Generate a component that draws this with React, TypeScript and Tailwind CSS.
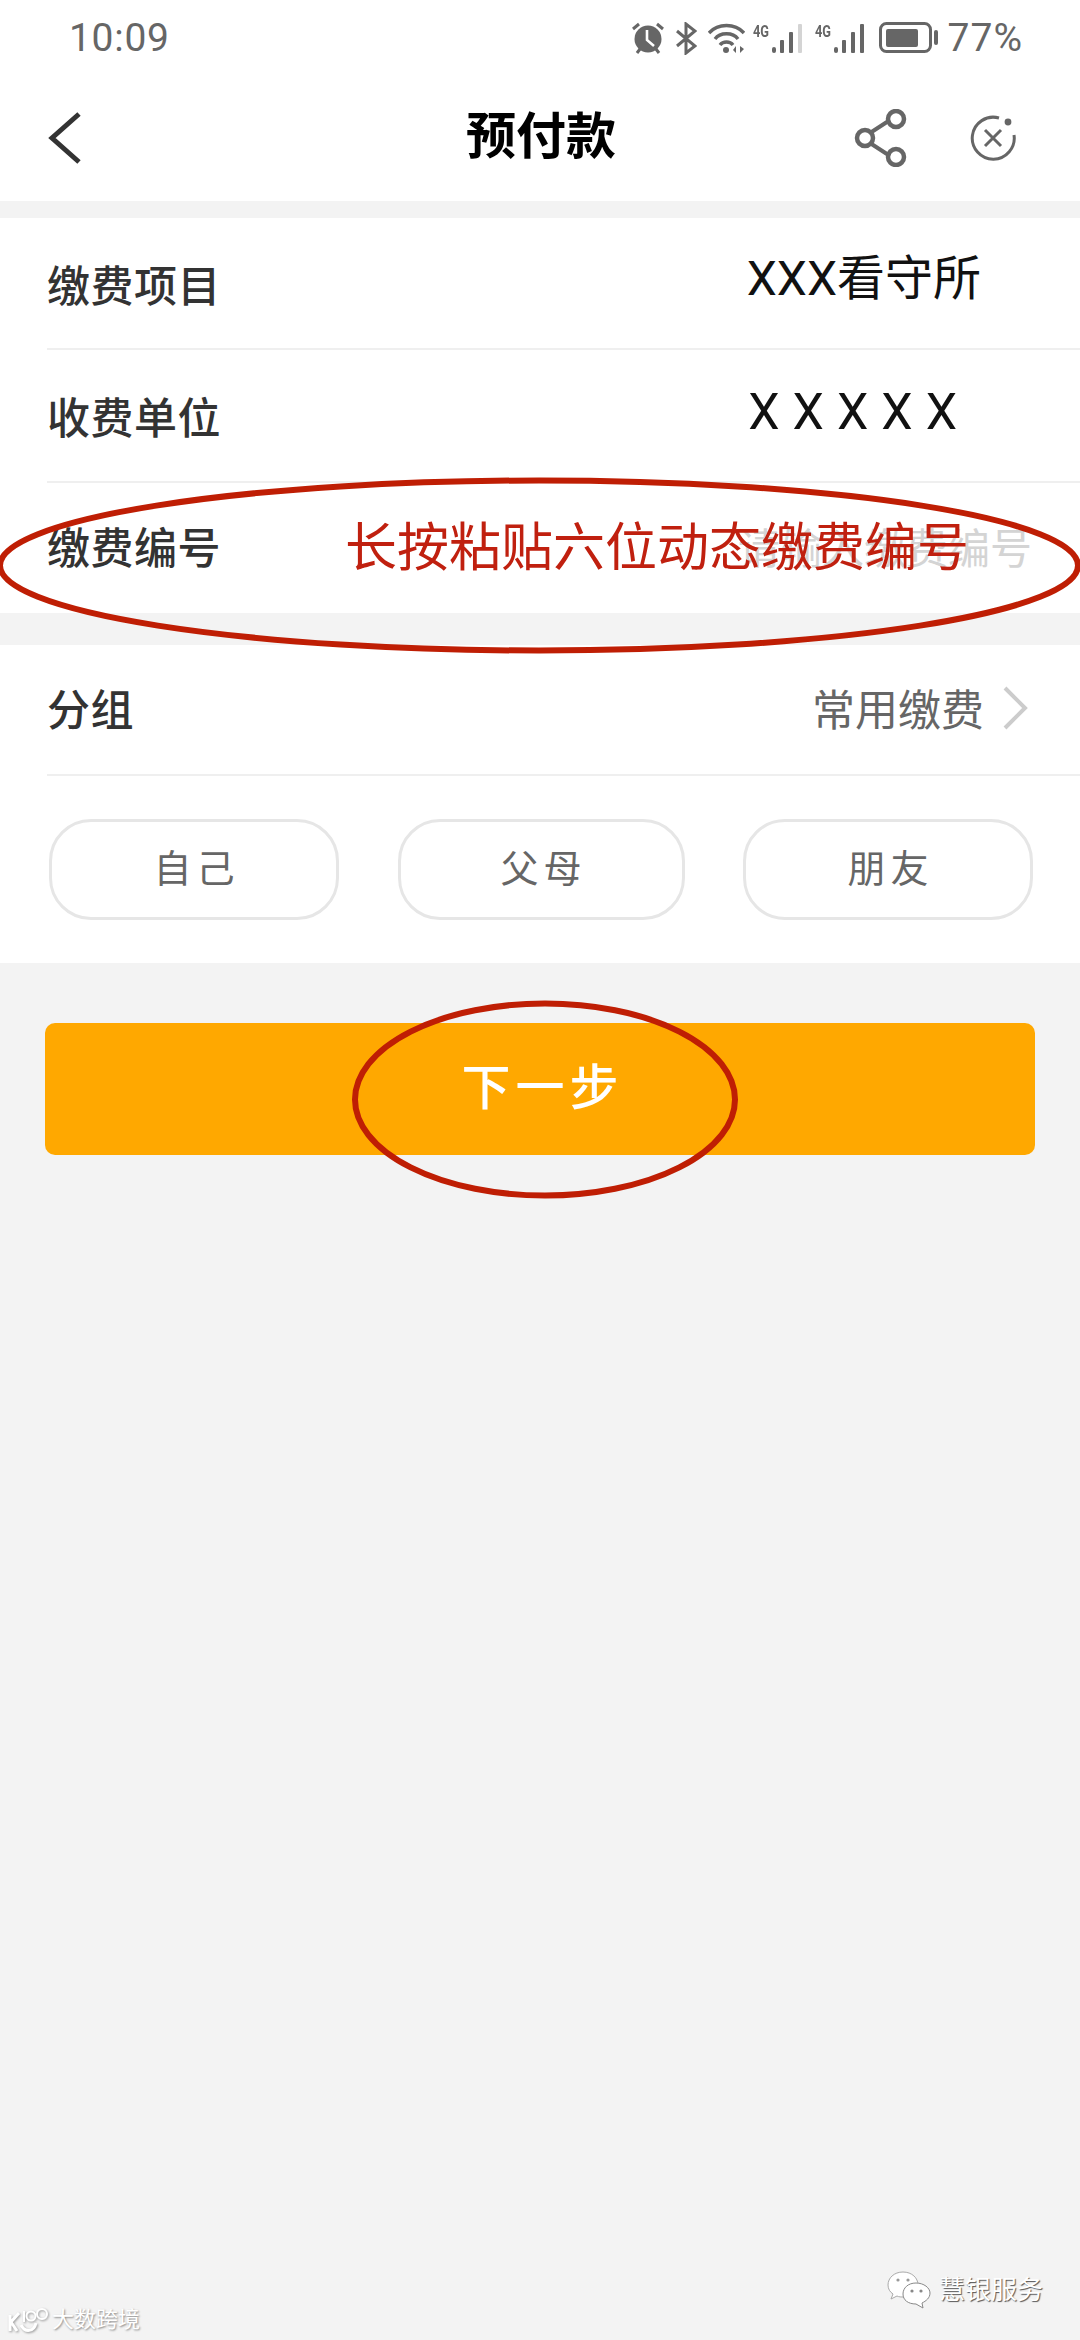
const cjk = "font-['Roboto','Noto_Sans_CJK_SC',sans-serif]";

// Status bar glyphs
const AlarmIcon = () => (
  <svg width="34" height="32" viewBox="0 0 34 32" className="shrink-0">
    <path d="M2 7 L8 2 M32 7 L26 2 M6 31 L9 27 M28 31 L25 27" stroke="#666" strokeWidth="3" fill="none" />
    <circle cx="17" cy="17" r="13.5" fill="#666" />
    <path d="M16 8 V18 L23 24" stroke="#fff" strokeWidth="2.6" fill="none" />
  </svg>
);

const BluetoothIcon = () => (
  <svg width="22" height="33" viewBox="0 0 22 33" className="shrink-0">
    <path d="M2 9 L20 24 L11 31 V2 L20 9 L2 24" stroke="#666" strokeWidth="3" fill="none" />
  </svg>
);

const WifiIcon = () => (
  <svg width="37" height="32" viewBox="0 0 37 32" className="shrink-0">
    <path d="M1 11 C10 1 27 1 36 11" stroke="#666" strokeWidth="3.4" fill="none" />
    <path d="M7 17 C12 10 25 10 30 17" stroke="#666" strokeWidth="3.4" fill="none" />
    <path d="M12 23 C15 19 22 19 25 23" stroke="#666" strokeWidth="3.4" fill="none" />
    <circle cx="18" cy="28" r="3" fill="#666" />
    <path d="M28 31 V24 L25 28 Z M32 24 V31 L36 27 Z" fill="#666" />
  </svg>
);

const Signal = ({ dim }: { dim?: boolean }) => (
  <div className="flex items-start shrink-0">
    <span className="w-[19px] text-[16px] leading-[15px] font-bold text-[#666] mt-[1px] font-['Roboto',sans-serif] scale-x-[0.8] origin-left">4G</span>
    <svg width="32" height="31" viewBox="0 0 32 31">
      <rect x="0" y="24" width="4" height="6" rx="2" fill="#666" />
      <rect x="8" y="17" width="4" height="13" rx="1" fill="#666" />
      <rect x="17" y="9" width="4" height="21" rx="1" fill="#666" />
      <rect x="26" y="1" width="4" height="29" rx="1" fill={dim ? '#d4d4d4' : '#666'} />
    </svg>
  </div>
);

const BatteryIcon = () => (
  <svg width="60" height="32" viewBox="0 0 60 32" className="shrink-0">
    <rect x="1.5" y="1.5" width="50" height="28" rx="6" stroke="#666" strokeWidth="3" fill="none" />
    <rect x="7" y="7" width="32" height="18" rx="2" fill="#666" />
    <rect x="55" y="8" width="4" height="15" rx="2" fill="#666" />
  </svg>
);

const WeChatIcon = () => (
  <svg width="44" height="38" viewBox="0 0 44 38">
    <path d="M16 1 C7 1 1 7 1 14 C1 18 3 21 6 23 L4 28 L10 25 C12 26 14 26 17 26 C25 26 31 20 31 14 C31 7 25 1 16 1 Z" fill="#fff" stroke="#aaa" strokeWidth="1" />
    <path d="M29 12 C21 12 16 17 16 23 C16 29 21 33 29 33 L36 37 L35 32 C39 30 43 27 43 22 C43 17 37 12 29 12 Z" fill="#fff" stroke="#888" strokeWidth="1" />
    <circle cx="11" cy="9" r="1.6" fill="#999" />
    <circle cx="21" cy="9" r="1.6" fill="#999" />
    <circle cx="25" cy="20" r="1.6" fill="#888" />
    <circle cx="34" cy="20" r="1.6" fill="#888" />
  </svg>
);

const KdLogo = () => (
  <svg width="42" height="26" viewBox="0 0 42 26" className="drop-shadow-[1px_1px_1px_#999]">
    <path d="M3 8 V24 M12 6 L4 15 L10 24 M14 18 C18 26 27 25 29 16" stroke="#fff" strokeWidth="3" fill="none" />
    <path d="M17 4 V15" stroke="#fff" strokeWidth="2" fill="none" />
    <circle cx="24" cy="9" r="4.5" stroke="#fff" strokeWidth="2" fill="none" />
    <circle cx="35" cy="7" r="5" stroke="#fff" strokeWidth="2" fill="none" />
  </svg>
);

const groups = ['自己', '父母', '朋友'];

export default function App() {
  return (
    <div className={`relative h-[2340px] overflow-hidden bg-[#f3f3f3] ${cjk}`}>
      {/* status bar + title */}
      <header className="bg-white h-[201px]">
        <div className="flex items-center justify-between h-[78px] pl-[69px] pr-[57px] pb-[2px]">
          <span className="text-[39px] leading-none text-[#666] tracking-[0.7px]">10:09</span>
          <div className="flex items-center">
            <div className="mr-[10px]"><AlarmIcon /></div>
            <div className="mr-[11px]"><BluetoothIcon /></div>
            <div className="mr-[8px]"><WifiIcon /></div>
            <div className="mr-[11px]"><Signal dim /></div>
            <div className="mr-[13px]"><Signal /></div>
            <div className="mr-[9px]"><BatteryIcon /></div>
            <span className="text-[39px] leading-none text-[#666] tracking-[1px]">77%</span>
          </div>
        </div>
        <div className="relative flex items-center justify-between h-[122px] pl-[48px] pr-[64px] pb-[2px]">
          <svg width="33" height="52" viewBox="0 0 33 52">
            <path d="M31 2 L4 26 L31 50" stroke="#333" strokeWidth="5" fill="none" />
          </svg>
          <div className="flex items-center gap-[63px]">
            <svg width="54" height="58" viewBox="0 0 54 58">
              <path d="M17 24 L37 11 M17 34 L37 47" stroke="#666" strokeWidth="4" fill="none" />
              <circle cx="43" cy="10" r="8" stroke="#666" strokeWidth="4.5" fill="none" />
              <circle cx="12" cy="29" r="8" stroke="#666" strokeWidth="4.5" fill="none" />
              <circle cx="43" cy="48" r="8" stroke="#666" strokeWidth="4.5" fill="none" />
            </svg>
            <svg width="46" height="46" viewBox="0 0 46 46">
              <path d="M29 3 A21 21 0 1 0 44 20" stroke="#666" strokeWidth="3" fill="none" />
              <path d="M15 15 L31 31 M31 15 L15 31" stroke="#666" strokeWidth="3" fill="none" />
              <circle cx="38" cy="7" r="3.4" fill="#666" />
            </svg>
          </div>
          <h1 className="absolute left-[2px] right-0 top-[27px] text-center text-[50px] leading-[64px] font-bold text-black">预付款</h1>
        </div>
      </header>

      {/* payment fields */}
      <section className="mt-[17px] bg-white">
        <div className="ml-[47px] flex items-center justify-between h-[132px] border-b-[2px] border-[#efefef]">
          <span className="text-[43px] tracking-[0.5px] font-medium text-[#333] pt-[8px]">缴费项目</span>
          <span className="mr-[99px] text-[48px] leading-none text-[#111] mb-[8px]">XXX看守所</span>
        </div>
        <div className="ml-[47px] flex items-center justify-between h-[133px] border-b-[2px] border-[#efefef]">
          <span className="text-[43px] tracking-[0.5px] font-medium text-[#333] pt-[8px]">收费单位</span>
          <span className="mr-[110px] text-[50px] leading-none text-[#111] tracking-[13px] mb-[8px]">XXXXX</span>
        </div>
        <div className="ml-[47px] flex items-center justify-between h-[130px]">
          <span className="text-[43px] tracking-[0.5px] font-medium text-[#333] pt-[3px]">缴费编号</span>
          <span className="mr-[48px] pt-[3px] text-[42px] text-[#d4d4d4]">请输入缴费编号</span>
        </div>
      </section>

      {/* group */}
      <section className="mt-[32px] bg-white pb-[43px]">
        <div className="ml-[47px] flex items-center justify-between h-[131px] border-b-[2px] border-[#efefef] pr-[52px]">
          <span className="text-[43px] tracking-[0.5px] font-medium text-[#333] pt-[4px]">分组</span>
          <div className="flex items-center gap-[18px]">
            <span className="text-[43px] text-[#666] pt-[4px]">常用缴费</span>
            <svg width="26" height="44" viewBox="0 0 26 44" className="mb-[4px]">
              <path d="M3 2 L23 22 L3 42" stroke="#ccc" strokeWidth="4" fill="none" />
            </svg>
          </div>
        </div>
        <div className="flex justify-between pl-[49px] pr-[47px] pt-[43px]">
          {groups.map((g, i) => (
            <button
              key={g}
              className={`h-[101px] ${i === 1 ? 'w-[287px]' : 'w-[290px]'} rounded-[42px] border-[3px] border-[#e6e6e6] bg-white text-[38px] pl-[5px] tracking-[5px] text-[#666]`}
            >
              {g}
            </button>
          ))}
        </div>
      </section>

      <div className="px-[45px] pt-[60px]">
        <button className="w-full h-[132px] rounded-[10px] bg-[#ffa800] text-white text-[49px] pl-[5px] font-medium tracking-[5px]">下一步</button>
      </div>

      {/* red annotations drawn on top of the screenshot */}
      <span className="absolute left-[345px] top-[513px] text-[52px] leading-[72px] text-[#c0200f] whitespace-nowrap">长按粘贴六位动态缴费编号</span>
      <svg width="1080" height="1200" viewBox="0 0 1080 1200" className="absolute left-0 top-0 pointer-events-none" fill="none">
        <ellipse cx="539" cy="565.5" rx="539" ry="85" stroke="#bf1e04" strokeWidth="6" />
        <ellipse cx="545" cy="1099.5" rx="190" ry="96" stroke="#bf1e04" strokeWidth="6" />
      </svg>

      {/* watermarks */}
      <div className="absolute left-[7px] top-[2307px] flex items-center gap-[3px]">
        <KdLogo />
        <span className="text-[22px] leading-none text-white [text-shadow:1px_1px_2px_#888]">大数跨境</span>
      </div>
      <div className="absolute left-[887px] top-[2271px] flex items-center gap-[8px]">
        <WeChatIcon />
        <span className="text-[26px] leading-none text-white [text-shadow:1px_1px_1px_#555]">慧银服务</span>
      </div>
    </div>
  );
}
